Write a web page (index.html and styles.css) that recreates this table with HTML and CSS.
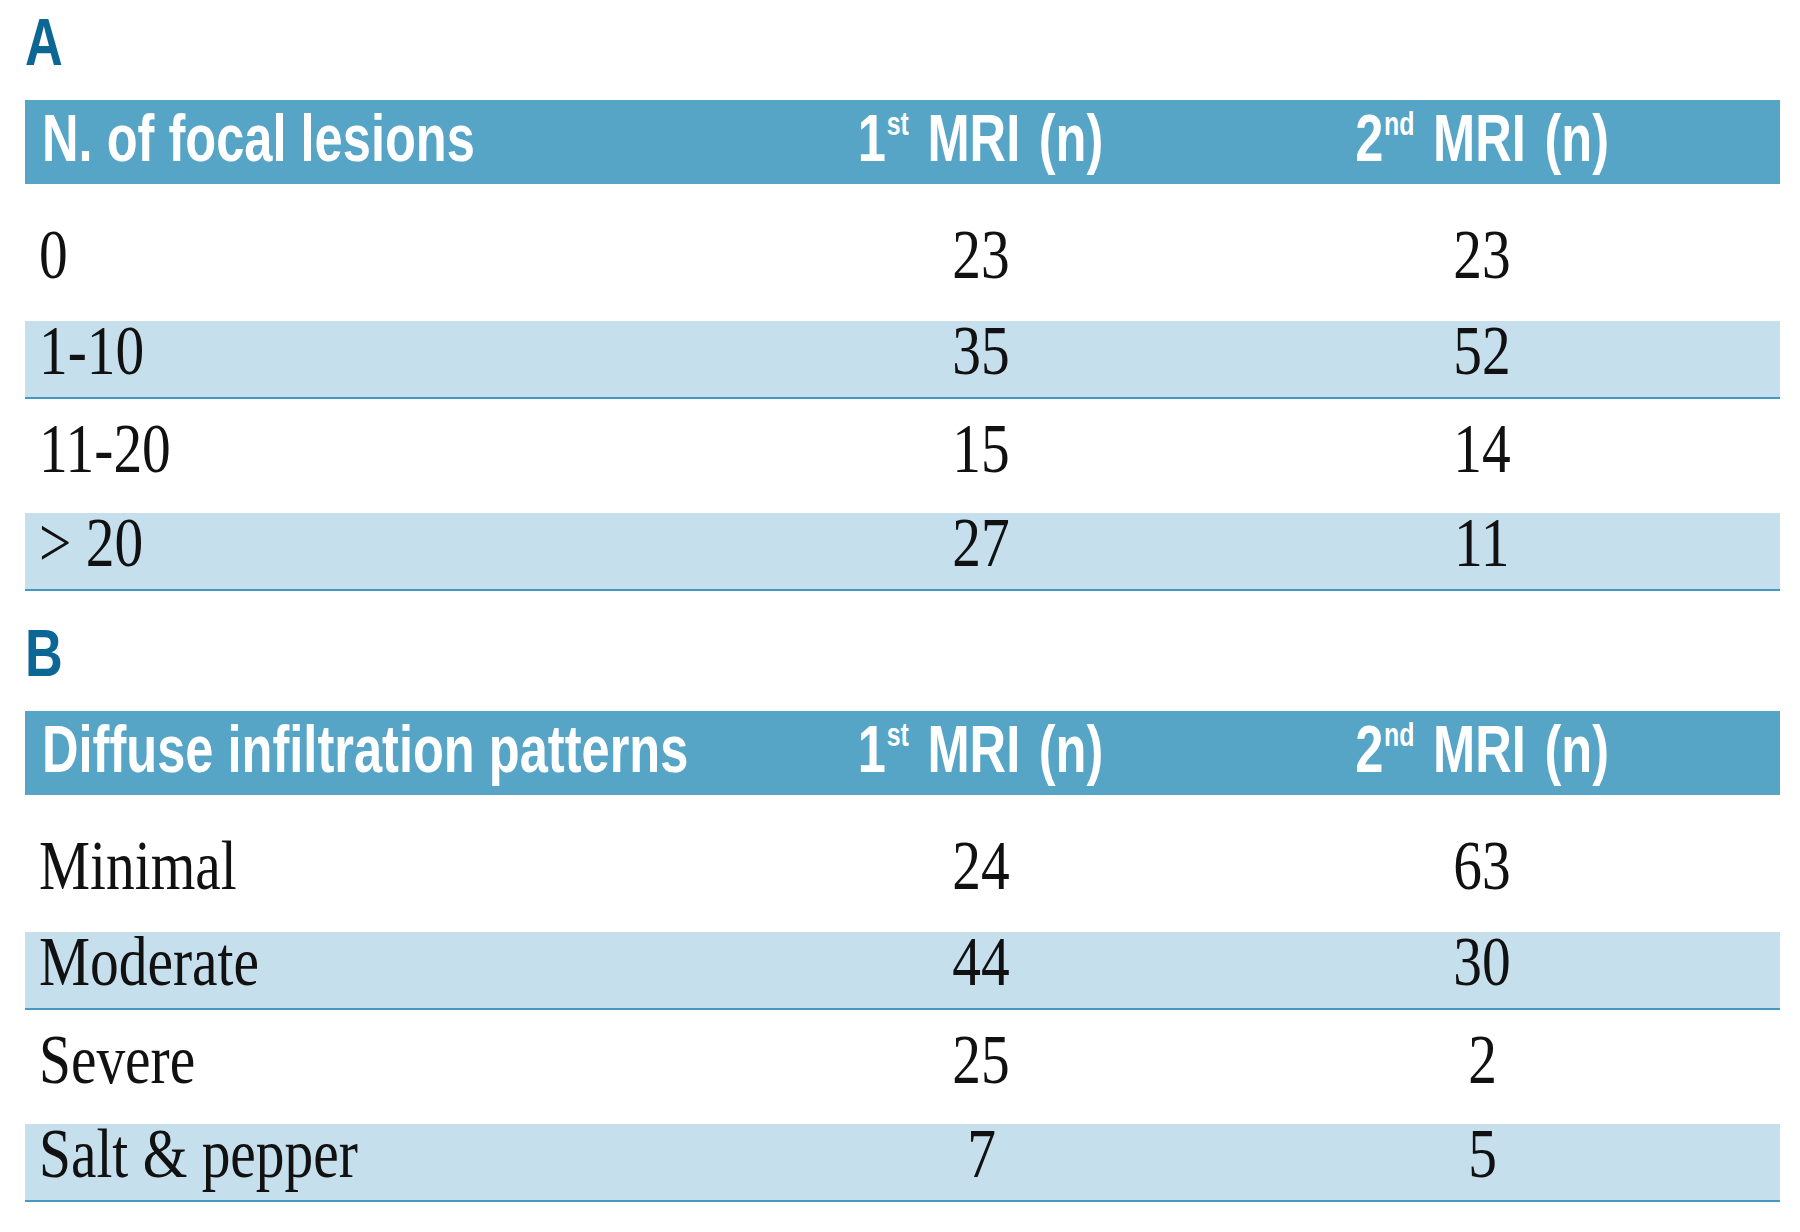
FILE: index.html
```html
<!DOCTYPE html>
<html lang="en">
<head>
<meta charset="utf-8">
<title>MRI focal lesions and diffuse infiltration patterns</title>
<link rel="stylesheet" href="styles.css">
</head>
<body>
<main class="page">
  <section class="panel">
    <div class="label"><span>A</span></div>
    <div class="grid">
      <div class="row head">
        <div class="c c1"><span>N. of focal lesions</span></div>
        <div class="c c2"><span>1<sup>st</sup> MRI (n)</span></div>
        <div class="c c3"><span>2<sup>nd</sup> MRI (n)</span></div>
      </div>
      <div class="row first">
        <div class="c c1"><span>0</span></div>
        <div class="c c2"><span>23</span></div>
        <div class="c c3"><span>23</span></div>
      </div>
      <div class="row shade">
        <div class="c c1"><span>1-10</span></div>
        <div class="c c2"><span>35</span></div>
        <div class="c c3"><span>52</span></div>
      </div>
      <div class="row plain">
        <div class="c c1"><span>11-20</span></div>
        <div class="c c2"><span>15</span></div>
        <div class="c c3"><span>14</span></div>
      </div>
      <div class="row shade">
        <div class="c c1"><span>&gt; 20</span></div>
        <div class="c c2"><span>27</span></div>
        <div class="c c3"><span>11</span></div>
      </div>
    </div>
  </section>
  <section class="panel">
    <div class="label"><span>B</span></div>
    <div class="grid">
      <div class="row head">
        <div class="c c1"><span>Diffuse infiltration patterns</span></div>
        <div class="c c2"><span>1<sup>st</sup> MRI (n)</span></div>
        <div class="c c3"><span>2<sup>nd</sup> MRI (n)</span></div>
      </div>
      <div class="row first">
        <div class="c c1"><span>Minimal</span></div>
        <div class="c c2"><span>24</span></div>
        <div class="c c3"><span>63</span></div>
      </div>
      <div class="row shade">
        <div class="c c1"><span>Moderate</span></div>
        <div class="c c2"><span>44</span></div>
        <div class="c c3"><span>30</span></div>
      </div>
      <div class="row plain">
        <div class="c c1"><span>Severe</span></div>
        <div class="c c2"><span>25</span></div>
        <div class="c c3"><span>2</span></div>
      </div>
      <div class="row shade">
        <div class="c c1"><span>Salt &amp; pepper</span></div>
        <div class="c c2"><span>7</span></div>
        <div class="c c3"><span>5</span></div>
      </div>
    </div>
  </section>
</main>
</body>
</html>
```
FILE: styles.css
```css
* { box-sizing: border-box; }

html, body {
  margin: 0;
  padding: 0;
  background: #ffffff;
}

.page {
  width: 1800px;
  padding: 9px 20px 0 25px;
  display: flex;
  flex-direction: column;
  gap: 29px;
}

.panel {
  display: flex;
  flex-direction: column;
}

.label {
  font-family: "Liberation Sans", Arial, sans-serif;
  font-weight: 700;
  font-size: 67px;
  line-height: 66px;
  height: 66px;
  color: #0c6794;
  margin-bottom: 25px;
}

.label span {
  display: inline-block;
  transform: scaleX(0.78);
  transform-origin: left center;
}

.grid {
  display: flex;
  flex-direction: column;
  width: 1755px;
}

.row {
  display: grid;
  grid-template-columns: 705px 502px 500px 1fr;
  font-family: "Liberation Serif", "Times New Roman", serif;
  font-size: 70px;
  line-height: 60px;
  color: #111111;
}

.c { white-space: nowrap; }

.c span {
  display: inline-block;
  transform: scaleX(0.82);
}

.c1 {
  padding-left: 14px;
}

.c1 span { transform-origin: left center; }

.c2, .c3 { text-align: center; }

.c2 span, .c3 span { transform-origin: center center; }

.head {
  height: 84px;
  background: #56a5c6;
  color: #ffffff;
  font-family: "Liberation Sans", Arial, sans-serif;
  font-weight: 700;
  font-size: 67px;
  line-height: 76px;
}

.head .c1 { padding-left: 17px; }

.head .c span { transform: scaleX(0.755); }

.head .c2, .head .c3 { word-spacing: 6px; }

.head sup {
  font-size: 33px;
  line-height: 0;
  vertical-align: 26px;
  margin-left: 1px;
}

.first {
  height: 137px;
  padding-top: 41px;
}

.shade {
  height: 78px;
  background: #c6dfec;
  border-bottom: 2px solid #4599c0;
}

.plain {
  height: 114px;
  padding-top: 20px;
}
```
